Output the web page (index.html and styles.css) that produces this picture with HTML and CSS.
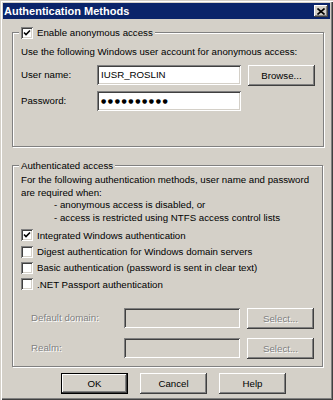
FILE: index.html
```html
<!DOCTYPE html>
<html lang="en">

<head>
  <meta charset="UTF-8">
  <title>Authentication Methods</title>
  <link rel="stylesheet" href="styles.css">
</head>

<body>
  <div class="window">
    <div class="title-bar">
      <span class="title-text">Authentication Methods</span>
      <span class="close-btn">
        <svg width="8" height="7" viewBox="0 0 8 7">
          <path d="M0.5 0.5 L7.5 6.5 M7.5 0.5 L0.5 6.5" stroke="#000" stroke-width="1.6" fill="none" />
        </svg>
      </span>
    </div>

    <div class="dialog">
      <fieldset class="group group-anon">
        <legend>
          <span class="option-inline">
            <span class="check checked">
              <svg width="8" height="8" viewBox="0 0 8 8">
                <path d="M1 3.5 L3 5.5 L7 1.5" stroke="#000" stroke-width="1.6" fill="none" />
              </svg>
            </span>
            Enable anonymous access
          </span>
        </legend>
        <p class="note">Use the following Windows user account for anonymous access:</p>
        <div class="field-row">
          <span class="field-label">User name:</span>
          <div class="textbox">IUSR_ROSLIN</div>
          <button class="btn">Browse...</button>
        </div>
        <div class="field-row second">
          <span class="field-label">Password:</span>
          <div class="textbox password">●●●●●●●●●●</div>
        </div>
      </fieldset>

      <fieldset class="group group-auth">
        <legend>Authenticated access</legend>
        <p class="note">For the following authentication methods, user name and password<br>are required when:</p>
        <ul class="conditions">
          <li>- anonymous access is disabled, or</li>
          <li>- access is restricted using NTFS access control lists</li>
        </ul>

        <div class="options">
          <div class="option">
            <span class="check checked">
              <svg width="8" height="8" viewBox="0 0 8 8">
                <path d="M1 3.5 L3 5.5 L7 1.5" stroke="#000" stroke-width="1.6" fill="none" />
              </svg>
            </span>
            Integrated Windows authentication
          </div>
          <div class="option"><span class="check"></span>Digest authentication for Windows domain servers</div>
          <div class="option"><span class="check"></span>Basic authentication (password is sent in clear text)</div>
          <div class="option"><span class="check"></span>.NET Passport authentication</div>
        </div>

        <div class="field-row disabled domain-row">
          <span class="field-label">Default domain:</span>
          <div class="textbox"></div>
          <button class="btn">Select...</button>
        </div>
        <div class="field-row disabled realm-row">
          <span class="field-label">Realm:</span>
          <div class="textbox"></div>
          <button class="btn">Select...</button>
        </div>
      </fieldset>

      <div class="actions">
        <button class="btn default">OK</button>
        <button class="btn">Cancel</button>
        <button class="btn">Help</button>
      </div>
    </div>
  </div>
</body>

</html>
```

FILE: styles.css
```css
* {
  margin: 0;
  padding: 0;
  box-sizing: border-box;
}

body {
  font-family: Tahoma, 'Liberation Sans', sans-serif;
  font-size: 9.7px;
  color: #000;
  background: #d4d0c8;
}

.window {
  width: 333px;
  height: 400px;
  padding: 3px;
  background: #d4d0c8;
  box-shadow: inset 1px 1px 0 #d4d0c8, inset 2px 2px 0 #fff,
    inset -1px -1px 0 #404040, inset -2px -2px 0 #808080;
}

.title-bar {
  height: 16px;
  background: #0a246a;
  display: flex;
  align-items: center;
  justify-content: space-between;
  padding: 0 2px 0 1px;
}

.title-text {
  color: #fff;
  font-weight: 700;
  font-size: 11px;
}

.close-btn {
  width: 14px;
  height: 12px;
  display: flex;
  align-items: center;
  justify-content: center;
  background: #d4d0c8;
  box-shadow: inset -1px -1px 0 #404040, inset 1px 1px 0 #fff,
    inset -2px -2px 0 #808080, inset 2px 2px 0 #d4d0c8;
}

.dialog {
  padding: 7px 9px 0 9px;
}

.group {
  border: 1px solid #808080;
  box-shadow: inset 1px 1px 0 #fff, 1px 1px 0 #fff;
  padding: 0 8px;
}

.group legend {
  margin-left: -2px;
  padding: 0 2px;
  line-height: 13px;
  background: #d4d0c8;
}

.option-inline,
.option {
  display: flex;
  align-items: center;
  gap: 4px;
  white-space: nowrap;
}

.check {
  width: 12px;
  height: 12px;
  flex: none;
  display: flex;
  align-items: center;
  justify-content: center;
  background: #fff;
  box-shadow: inset 1px 1px 0 #808080, inset -1px -1px 0 #fff,
    inset 2px 2px 0 #404040, inset -2px -2px 0 #d4d0c8;
}

.group-anon {
  padding-top: 6px;
  padding-bottom: 35px;
}

.note {
  line-height: 13px;
  white-space: nowrap;
}

.field-row {
  display: flex;
  align-items: flex-start;
  margin-top: 7px;
}

.field-row.second {
  margin-top: 5px;
}

.field-label {
  width: 76px;
  line-height: 20px;
}

.textbox {
  width: 144px;
  height: 20px;
  padding: 0 4px;
  line-height: 20px;
  background: #fff;
  box-shadow: inset 1px 1px 0 #808080, inset -1px -1px 0 #fff,
    inset 2px 2px 0 #404040, inset -2px -2px 0 #d4d0c8;
}

.textbox.password {
  font-family: 'DejaVu Sans', sans-serif;
  font-size: 6px;
  letter-spacing: 1.6px;
}

.btn {
  width: 67px;
  height: 21px;
  margin-left: 7px;
  border: none;
  font: inherit;
  color: #000;
  background: #d4d0c8;
  box-shadow: inset -1px -1px 0 #404040, inset 1px 1px 0 #fff,
    inset -2px -2px 0 #808080, inset 2px 2px 0 #d4d0c8;
}

.group-auth {
  margin-top: 12px;
  padding-top: 2px;
  padding-bottom: 7px;
}

.group-auth .note,
.conditions {
  line-height: 12.5px;
}

.conditions {
  list-style: none;
  padding-left: 33px;
  white-space: nowrap;
}

.options {
  margin-top: 3px;
}

.option {
  height: 16.4px;
}

.disabled .field-label,
.disabled .btn {
  color: #808080;
  text-shadow: 1px 1px 0 #fff;
}

.disabled .textbox {
  background: #d4d0c8;
  width: 116px;
}

.disabled .field-label {
  width: 103px;
  padding-left: 10px;
}

.domain-row {
  margin-top: 15px;
}

.realm-row {
  margin-top: 9px;
}

.actions {
  display: flex;
  gap: 12px;
  margin-top: 6px;
  padding-left: 49px;
}

.actions .btn {
  margin-left: 0;
}

.btn.default {
  border: 1px solid #000;
}
```
